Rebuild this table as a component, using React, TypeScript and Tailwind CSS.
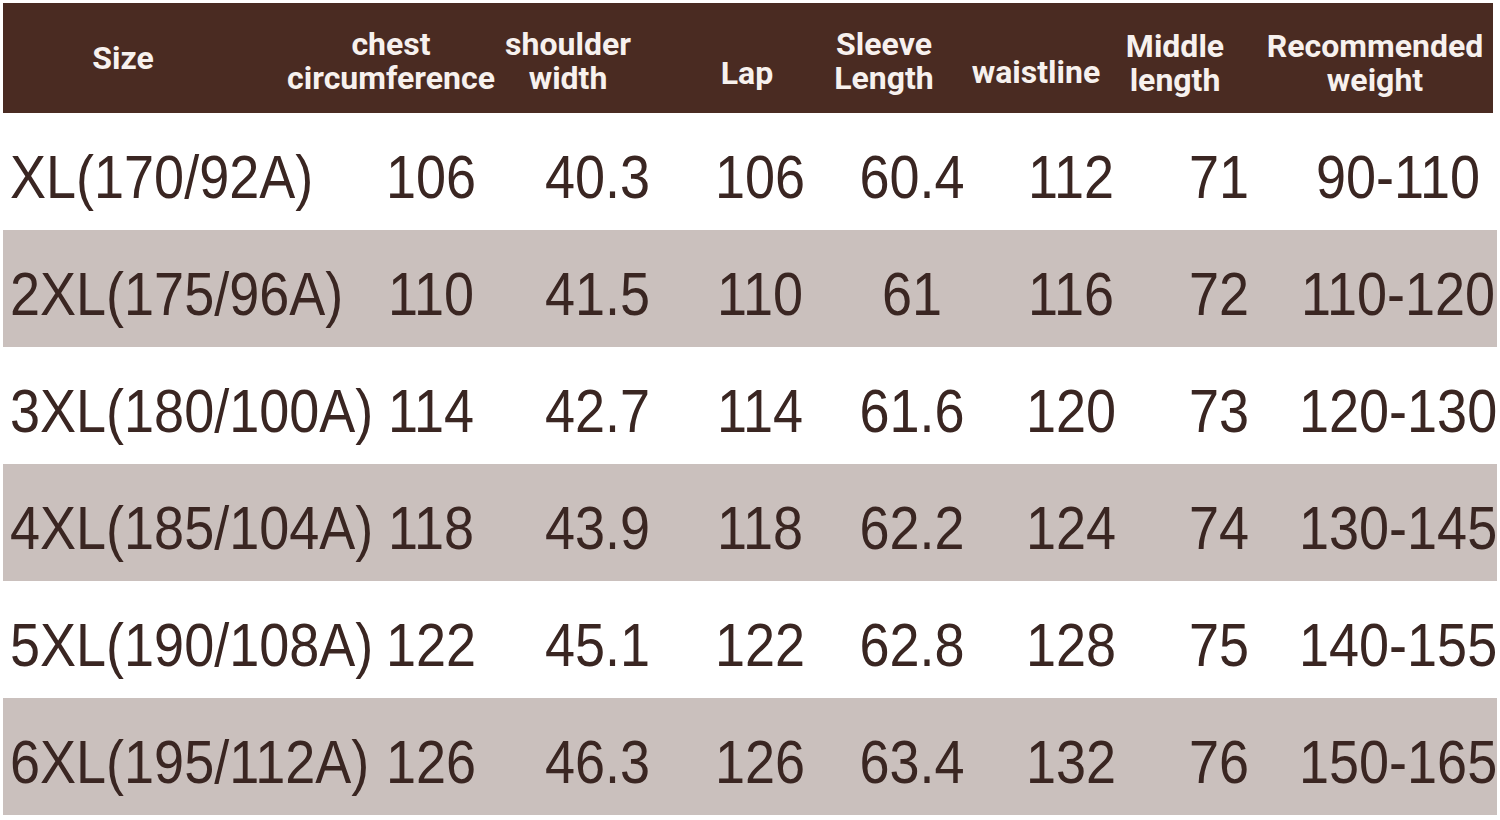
const headers = [
  { lines: ["Size"], w: "w-[120px]", ml: "ml-[60px]", shift: "-mt-[6px]" },
  { lines: ["chest", "circumference"], w: "w-[220px]", ml: "ml-[98px]", shift: "" },
  { lines: ["shoulder", "width"], w: "w-[134px]", ml: "ml-0", shift: "" },
  { lines: ["Lap"], w: "w-[80px]", ml: "ml-[72px]", shift: "mt-[24px]" },
  { lines: ["Sleeve", "Length"], w: "w-[110px]", ml: "ml-[42px]", shift: "" },
  { lines: ["waistline"], w: "w-[136px]", ml: "ml-[29px]", shift: "mt-[22px]" },
  { lines: ["Middle", "length"], w: "w-[110px]", ml: "ml-[16px]", shift: "mt-[4px]" },
  { lines: ["Recommended", "weight"], w: "w-[236px]", ml: "ml-[27px]", shift: "mt-[4px]" },
];

const rows = [
  ["XL(170/92A)", "106", "40.3", "106", "60.4", "112", "71", "90-110"],
  ["2XL(175/96A)", "110", "41.5", "110", "61", "116", "72", "110-120"],
  ["3XL(180/100A)", "114", "42.7", "114", "61.6", "120", "73", "120-130"],
  ["4XL(185/104A)", "118", "43.9", "118", "62.2", "124", "74", "130-145"],
  ["5XL(190/108A)", "122", "45.1", "122", "62.8", "128", "75", "140-155"],
  ["6XL(195/112A)", "126", "46.3", "126", "63.4", "132", "76", "150-165"],
];

function Cell({ children, className = "" }: { children: string; className?: string }) {
  return (
    <div className={`whitespace-nowrap ${className}`}>
      <span className="inline-block scale-y-[1.12]">{children}</span>
    </div>
  );
}

export default function App() {
  return (
    <div className="w-[1500px] h-[820px] bg-white pl-[3px] pt-[3px] overflow-hidden">
      {/* header bar */}
      <div className="flex h-[110px] w-[1490px] items-center bg-[#4a2b22] pt-[6px] text-[32px] leading-[34px] font-bold text-[#f7f1ee] font-['Roboto',sans-serif]">
        {headers.map((h) => (
          <div
            key={h.lines.join(" ")}
            className={`flex shrink-0 flex-col items-center justify-center whitespace-nowrap ${h.w} ${h.ml} ${h.shift}`}
          >
            {h.lines.map((l) => (
              <span key={l}>{l}</span>
            ))}
          </div>
        ))}
      </div>

      {/* data rows */}
      <div className="w-[1494px] font-['Liberation_Sans',Arial,sans-serif] text-[54px] leading-none text-[#3a2622]">
        {rows.map((r, i) => (
          <div
            key={r[0]}
            className={`grid h-[117px] grid-cols-[344px_168px_165px_160px_144px_174px_122px_1fr] items-center pt-[10px] ${
              i % 2 === 1 ? "bg-[#cac0bd]" : "bg-white"
            }`}
          >
            <Cell className="pl-[7px]">{r[0]}</Cell>
            <Cell className="text-center">{r[1]}</Cell>
            <Cell className="text-center">{r[2]}</Cell>
            <Cell className="text-center">{r[3]}</Cell>
            <Cell className="text-center">{r[4]}</Cell>
            <Cell className="text-center">{r[5]}</Cell>
            <Cell className="text-center">{r[6]}</Cell>
            <Cell className="text-center pl-[19px]">{r[7]}</Cell>
          </div>
        ))}
      </div>
    </div>
  );
}
